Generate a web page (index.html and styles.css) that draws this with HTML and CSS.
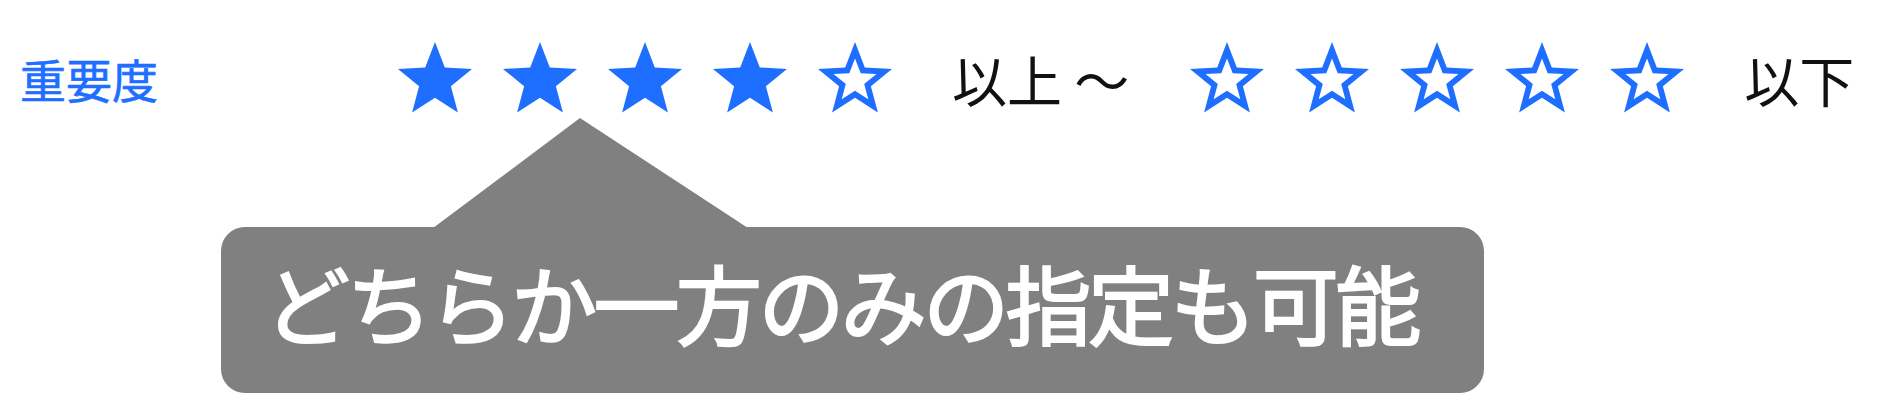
FILE: index.html
```html
<!DOCTYPE html>
<html lang="ja">
<head>
  <meta charset="UTF-8">
  <meta name="viewport" content="width=device-width, initial-scale=1.0">
  <title>重要度フィルター</title>
  <link rel="stylesheet" href="styles.css">
</head>
<body>
  <svg class="sprites" xmlns="http://www.w3.org/2000/svg">
    <symbol id="star-full" viewBox="-37 -39 74 71">
      <polygon points="0,-38.9 9.8,-13.5 37,-12 15.9,5.2 22.9,31.5 0,16.7 -22.9,31.5 -15.9,5.2 -37,-12 -9.8,-13.5"/>
    </symbol>
    <symbol id="star-empty" viewBox="-37 -39 74 71">
      <path fill-rule="evenodd" d="M0,-38.9 L9.8,-13.5 L37,-12 L15.9,5.2 L22.9,31.5 L0,16.7 L-22.9,31.5 L-15.9,5.2 L-37,-12 L-9.8,-13.5 Z
        M0,-22.6 L-5.7,-7.8 L-21.5,-7 L-9.2,3 L-13.3,18.3 L0,9.7 L13.3,18.3 L9.2,3 L21.5,-7 L5.7,-7.8 Z"/>
    </symbol>
  </svg>

  <div class="filter-row">
    <div class="filter-label">重要度</div>

    <div class="stars" id="min-stars"></div>
    <span class="range-text">以上 ～</span>

    <div class="stars" id="max-stars"></div>
    <span class="range-text">以下</span>
  </div>

  <div class="hint">どちらか一方のみの指定も可能</div>

  <script>
    // min = 4 stars selected, max left empty
    const ranges = [
      { id: 'min-stars', value: 4 },
      { id: 'max-stars', value: 0 }
    ];

    ranges.forEach(r => {
      const box = document.getElementById(r.id);
      for (let i = 1; i <= 5; i++) {
        const kind = i <= r.value ? 'star-full' : 'star-empty';
        box.insertAdjacentHTML('beforeend',
          `<svg class="star" data-value="${i}"><use href="#${kind}"></use></svg>`);
      }
    });
  </script>
</body>
</html>
```

FILE: styles.css
```css
body {
  margin: 0;
  font-family: "Noto Sans CJK JP", "Noto Sans", sans-serif;
  background: #fff;
}
.sprites {
  display: none;
}
.filter-row {
  display: flex;
  align-items: center;
  height: 71px;
  padding: 42px 0 0 20px;
}
.filter-row > * {
  flex-shrink: 0;
}
.filter-label {
  width: 378px;
  font-size: 46px;
  color: #1e6eff;
  -webkit-text-stroke: 0.6px #1e6eff;
}
.stars {
  display: flex;
  gap: 31px;
}
.star {
  width: 74px;
  height: 71px;
  fill: #1e6eff;
}
.range-text {
  margin: 0 61px 0 60px;
  font-size: 55px;
  color: #111;
  white-space: pre;
}
.hint {
  position: relative;
  width: 1263px;
  height: 166px;
  margin: 114px 0 0 221px;
  padding: 32px 0 0 43px;
  box-sizing: border-box;
  background: #808080;
  border-radius: 24px;
  color: #fff;
  font-size: 86px;
  letter-spacing: -3.6px;
  line-height: 1;
  -webkit-text-stroke: 2.2px #fff;
}
.hint::before {
  content: "";
  position: absolute;
  left: 212px;
  top: -109px;
  width: 315px;
  height: 110px;
  background: #808080;
  clip-path: polygon(0 100%, 147px 0, 100% 100%);
}
```
